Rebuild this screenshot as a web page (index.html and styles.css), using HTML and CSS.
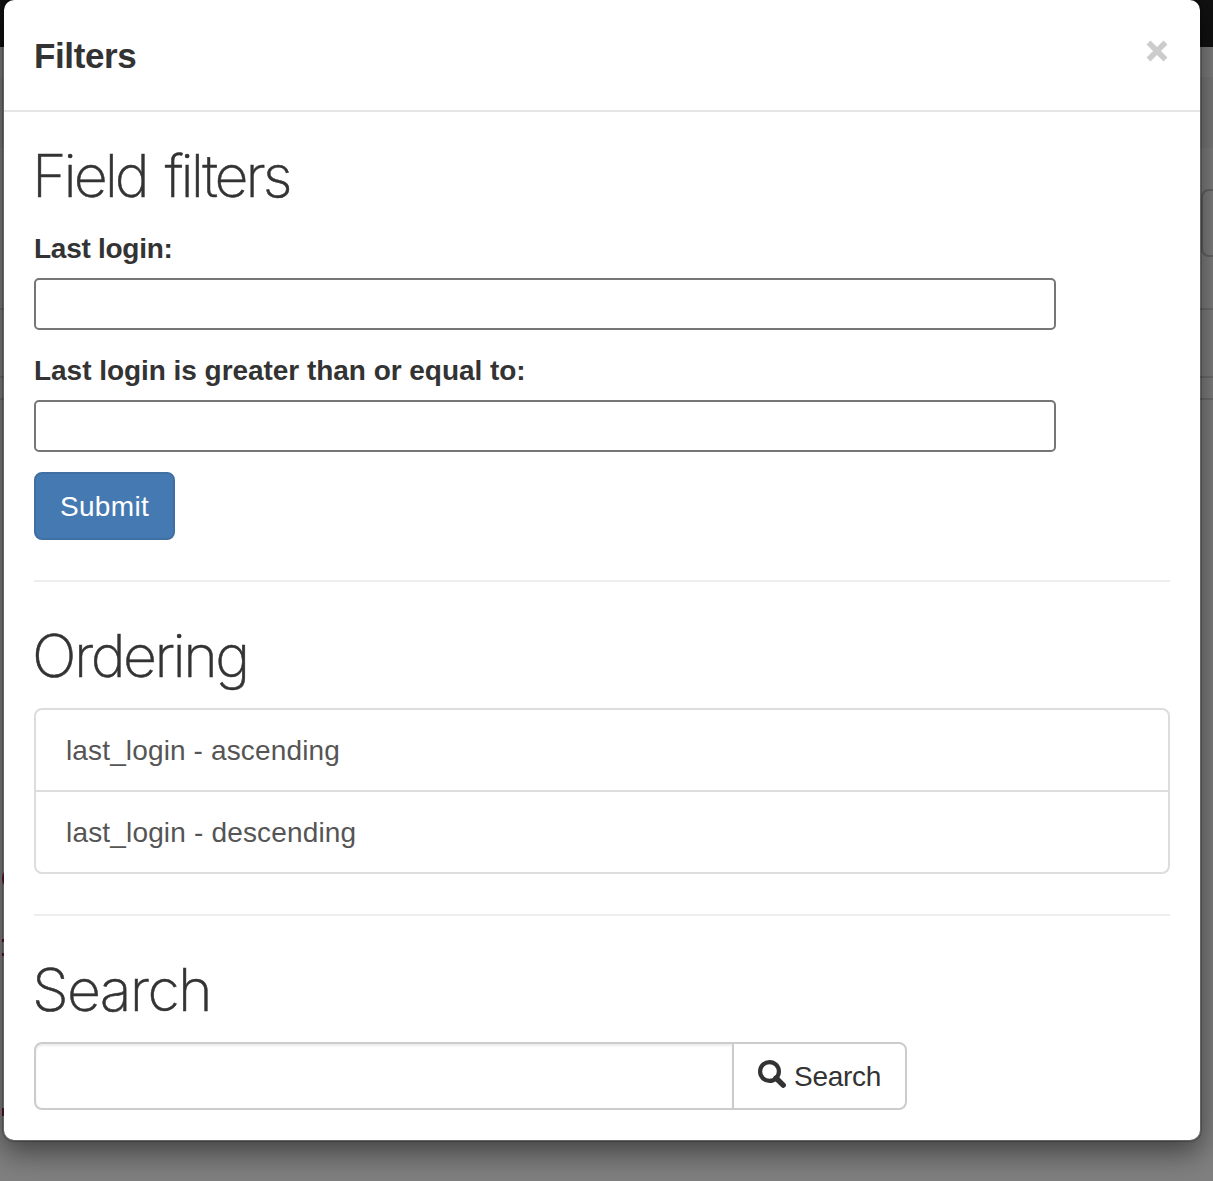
FILE: index.html
```html
<!DOCTYPE html>
<html lang="en">
<head>
<meta charset="utf-8">
<title>Filters</title>
<link rel="stylesheet" href="styles.css">
</head>
<body>
<div class="page">
  <div class="navbar"></div>
  <div class="crumb"></div>
  <div class="page-button"></div>
  <div class="line line-one"></div>
  <div class="line line-two"></div>
  <div class="line line-three"></div>
  <i class="code code-one"></i>
  <i class="code code-two"></i>
  <i class="code code-three"></i>
</div>
<div class="modal" role="dialog">
  <header class="modal-header">
    <h4 class="modal-title">Filters</h4>
    <button class="close" aria-label="Close"><svg width="22" height="22" viewBox="0 0 22 22"><path d="M2.5 2.5 19.5 19.5M19.5 2.5 2.5 19.5" stroke="#ccc" stroke-width="5.6"/></svg></button>
  </header>
  <div class="modal-body">
    <h2 class="heading heading-fields">Field filters</h2>
    <form class="fields">
      <label class="label label-login" for="login">Last login:</label>
      <input class="field" id="login">
      <label class="label label-gte" for="login-gte">Last login is greater than or equal to:</label>
      <input class="field" id="login-gte">
      <button class="submit" type="button"><span class="submit-text">Submit</span></button>
    </form>
    <hr class="rule">
    <h2 class="heading heading-ordering">Ordering</h2>
    <div class="list">
      <a class="item item-asc">last_login - ascending</a>
      <a class="item item-desc">last_login - descending</a>
    </div>
    <hr class="rule">
    <h2 class="heading heading-search">Search</h2>
    <div class="search">
      <input class="search-input">
      <button class="search-button" type="button"><svg class="glass" width="28" height="28" viewBox="0 0 28 28"><circle cx="11.5" cy="11.5" r="9.4" fill="none" stroke="#333" stroke-width="4.2"/><path d="M18 18 25.2 25.2" stroke="#333" stroke-width="5.4" stroke-linecap="round"/></svg><span class="search-text">Search</span></button>
    </div>
  </div>
</div>
</body>
</html>
```
FILE: styles.css
```css
* { box-sizing: border-box; }
body {
  margin: 0;
  width: 1213px;
  height: 1181px;
  overflow: hidden;
  background: #808080;
  color: #333;
  font: 28px/40px "Liberation Sans", Arial, sans-serif;
}
.page { position: absolute; inset: 0; overflow: hidden; }
.navbar { height: 47px; background: #111; }
.crumb { height: 71px; margin-top: 30px; background: #7b7b7b; }
.page-button { width: 60px; height: 68px; margin: 41px 0 0 1201px; border: 2px solid #666; border-radius: 8px; }
.line { height: 2px; background: #6f6f6f; }
.line-one { margin-top: 51px; }
.line-two { margin-top: 66px; }
.line-three { margin-top: 20px; }
.code { position: absolute; background: #631226; }
.code-one { left: 2px; top: 870px; width: 12px; height: 17px; border-radius: 50%; }
.code-two { left: 2px; top: 939px; width: 2px; height: 17px; background: linear-gradient(#631226 3px, transparent 3px 14px, #631226 14px); }
.code-three { left: 2px; top: 1108px; width: 2px; height: 8px; }
.modal {
  position: relative;
  width: 1200px;
  height: 1144px;
  margin: -2px 0 0 2px;
  background: #fff;
  background-clip: padding-box;
  border: 2px solid rgba(0, 0, 0, .2);
  border-radius: 12px;
  box-shadow: 0 10px 30px rgba(0, 0, 0, .5);
}
.modal-header {
  display: flex;
  justify-content: space-between;
  height: 112px;
  padding: 30px;
  border-bottom: 2px solid #e5e5e5;
}
.modal-title { margin: 0; font-size: 35px; line-height: 51px; font-weight: 700; letter-spacing: -.4px; }
.close { display: block; width: 22px; height: 22px; margin: 10px 2px 0 0; padding: 0; border: 0; background: none; }
.close svg { display: block; }
.modal-body { padding: 30px; }
.heading {
  margin: 0 0 0 -2px;
  height: 66px;
  padding-top: 1px;
  font: 200 59px/66px Inter, "Liberation Sans", sans-serif;
  -webkit-text-stroke: .5px #333;
  white-space: nowrap;
}
.heading-fields { letter-spacing: -3.05px; word-spacing: 4.5px; }
.heading-ordering { letter-spacing: -2.5px; }
.heading-search { letter-spacing: -1.7px; }
.fields { display: flex; flex-direction: column; align-items: flex-start; margin-top: 20px; }
.label { height: 40px; padding-top: 1px; margin-bottom: 10px; font-weight: 700; white-space: nowrap; }
.label-login { letter-spacing: -.27px; }
.label-gte { letter-spacing: -.04px; }
.field { display: block; width: 1022px; height: 52px; margin: 0 0 20px; border: 2px solid #767676; border-radius: 5px; background: #fff; }
.submit {
  width: 141px; height: 68px; padding: 2px 0 0;
  border: 2px solid #3f6fa3; border-radius: 8px;
  background: #4579b2; color: #fff; font: inherit; letter-spacing: .35px;
}
.rule { height: 2px; margin: 40px 0; border: 0; background: #eee; }
.list { margin-top: 20px; border: 2px solid #ddd; border-radius: 8px; }
.item { display: block; height: 80px; padding: 21px 30px 19px; color: #555; letter-spacing: .14px; }
.item + .item { height: 82px; border-top: 2px solid #ddd; letter-spacing: .17px; }
.search { display: flex; margin-top: 20px; height: 68px; }
.search-input {
  width: 700px; margin: 0; border: 2px solid #ccc; border-radius: 8px 0 0 8px;
  background: #fff; box-shadow: inset 0 2px 2px rgba(0, 0, 0, .075);
}
.search-button {
  display: flex; align-items: center; width: 175px; margin: 0 0 0 -2px; padding: 0 0 0 24px;
  border: 2px solid #ccc; border-radius: 0 8px 8px 0; background: #fff; color: #333; font: inherit;
}
.glass { flex: none; margin: -5px 8px 0 0; }
.search-text { padding-top: 2px; letter-spacing: -.3px; }
```
